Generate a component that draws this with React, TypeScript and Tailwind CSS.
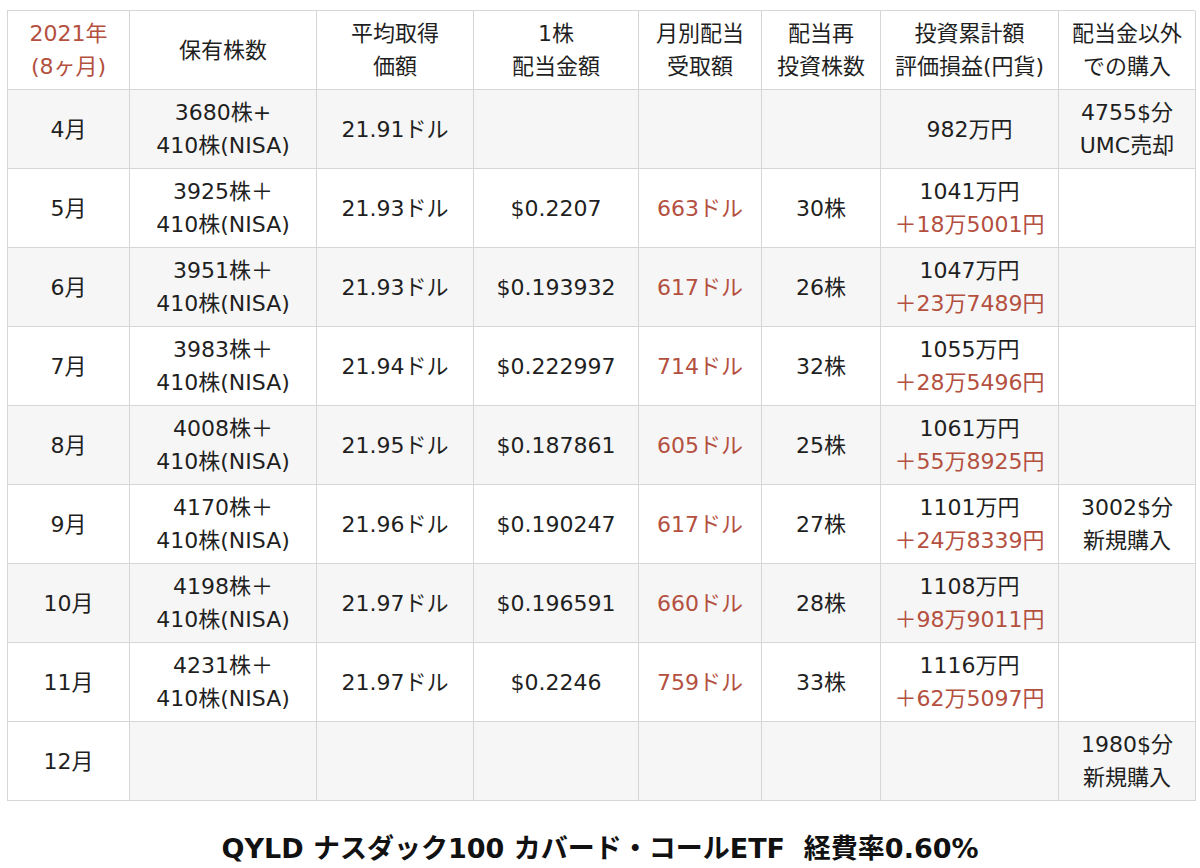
import React from "react";

type Cell = { t?: string; r?: string };
type Row = { m: string; c: (Cell | null)[]; firstWhite?: boolean };

const widths = "grid-cols-[122px_187px_157px_165px_123px_119px_178px_137px]";

const rows: Row[] = [
  { m: "4月", c: [{ t: "3680株+\n410株(NISA)" }, { t: "21.91ドル" }, null, null, null, { t: "982万円" }, { t: "4755$分\nUMC売却" }] },
  { m: "5月", c: [{ t: "3925株＋\n410株(NISA)" }, { t: "21.93ドル" }, { t: "$0.2207" }, { r: "663ドル" }, { t: "30株" }, { t: "1041万円", r: "＋18万5001円" }, null] },
  { m: "6月", c: [{ t: "3951株＋\n410株(NISA)" }, { t: "21.93ドル" }, { t: "$0.193932" }, { r: "617ドル" }, { t: "26株" }, { t: "1047万円", r: "＋23万7489円" }, null] },
  { m: "7月", c: [{ t: "3983株＋\n410株(NISA)" }, { t: "21.94ドル" }, { t: "$0.222997" }, { r: "714ドル" }, { t: "32株" }, { t: "1055万円", r: "＋28万5496円" }, null] },
  { m: "8月", c: [{ t: "4008株＋\n410株(NISA)" }, { t: "21.95ドル" }, { t: "$0.187861" }, { r: "605ドル" }, { t: "25株" }, { t: "1061万円", r: "＋55万8925円" }, null] },
  { m: "9月", c: [{ t: "4170株＋\n410株(NISA)" }, { t: "21.96ドル" }, { t: "$0.190247" }, { r: "617ドル" }, { t: "27株" }, { t: "1101万円", r: "＋24万8339円" }, { t: "3002$分\n新規購入" }] },
  { m: "10月", c: [{ t: "4198株＋\n410株(NISA)" }, { t: "21.97ドル" }, { t: "$0.196591" }, { r: "660ドル" }, { t: "28株" }, { t: "1108万円", r: "＋98万9011円" }, null] },
  { m: "11月", c: [{ t: "4231株＋\n410株(NISA)" }, { t: "21.97ドル" }, { t: "$0.2246" }, { r: "759ドル" }, { t: "33株" }, { t: "1116万円", r: "＋62万5097円" }, null] },
  { m: "12月", c: [null, null, null, null, null, null, { t: "1980$分\n新規購入" }], firstWhite: true },
];

const headers = ["保有株数", "平均取得\n価額", "1株\n配当金額", "月別配当\n受取額", "配当再\n投資株数", "投資累計額\n評価損益(円貨)", "配当金以外\nでの購入"];

function CellBox({ children, gray }: { children?: React.ReactNode; gray?: boolean }) {
  return (
    <div
      className={`h-[79px] border-r border-b border-[#d6d6d6] flex flex-col items-center justify-center text-center whitespace-pre-line leading-[33px] ${
        gray ? "bg-[#f6f6f6]" : "bg-white"
      }`}
    >
      {children}
    </div>
  );
}

export default function App() {
  return (
    <div
      className="w-[1200px] h-[868px] bg-white text-[#1f1f1f] text-[22px]"
      style={{ fontFamily: '"DejaVu Sans", "Noto Sans CJK JP", sans-serif' }}
    >
      <div className="pt-[10px] pl-[7px]">
        <div className={`grid ${widths} w-[1188px] border-l border-t border-[#d6d6d6]`}>
          <CellBox>
            <span className="text-[#b4503f]">{"2021年\n(8ヶ月)"}</span>
          </CellBox>
          {headers.map((h, i) => (
            <CellBox key={i}>{h}</CellBox>
          ))}
          {rows.map((row, ri) => {
            const gray = ri % 2 === 0;
            return (
              <React.Fragment key={ri}>
                <CellBox gray={gray && !row.firstWhite}>{row.m}</CellBox>
                {row.c.map((c, ci) => (
                  <CellBox key={ci} gray={gray}>
                    {c?.t && <span>{c.t}</span>}
                    {c?.r && <span className="text-[#b4503f]">{c.r}</span>}
                  </CellBox>
                ))}
              </React.Fragment>
            );
          })}
        </div>
      </div>
      <div className="mt-[30px] text-center font-bold text-[27px] leading-[36px] text-[#111] whitespace-pre">
        {"QYLD ナスダック100 カバード・コールETF  経費率0.60%"}
      </div>
    </div>
  );
}
